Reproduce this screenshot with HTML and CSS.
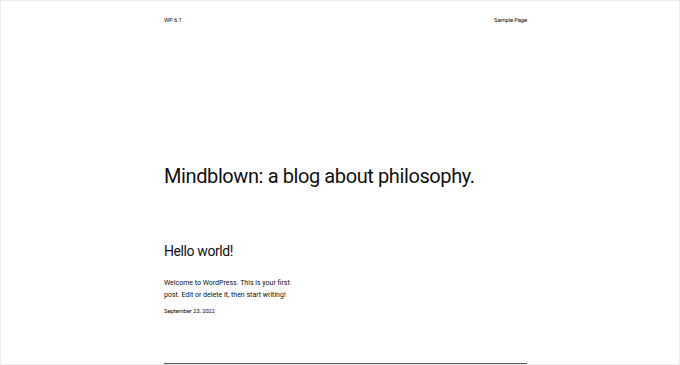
FILE: index.html
```html
<!DOCTYPE html>
<html lang="en">
<head>
    <meta charset="UTF-8">
    <meta name="viewport" content="width=device-width, initial-scale=1.0">
    <title>WP 6.1</title>
    <link rel="stylesheet" href="styles.css">
</head>
<body>
    <div class="frame">
        <div class="site">
            <!-- Header -->
            <header class="site-header">
                <a class="site-title" href="#">WP 6.1</a>
                <nav class="site-nav">
                    <a href="#">Sample Page</a>
                </nav>
            </header>

            <h1 class="tagline">Mindblown: a blog about philosophy.</h1>

            <!-- Post list -->
            <article class="post">
                <h2 class="post-title"><a href="#">Hello world!</a></h2>
                <p class="post-excerpt">Welcome to WordPress. This is your first post. Edit or delete it, then start writing!</p>
                <time class="post-date" datetime="2022-09-23">September 23, 2022</time>
            </article>

            <hr class="separator">
        </div>
    </div>
</body>
</html>
```

FILE: styles.css
```css
/* Twenty Twenty-Three style front page */
body {
    margin: 0;
    font-family: Roboto, "Noto Sans", sans-serif;
    color: #111;
    background-color: #fff;
}

a {
    color: inherit;
    text-decoration: none;
}

.frame {
    height: 365px;
    box-sizing: border-box;
    border: 1px solid #ececec;
    overflow: hidden;
}

.site {
    width: 363px;
    margin-left: 163px;
}

.site-header {
    display: flex;
    justify-content: space-between;
    padding-top: 14px;
    font-size: 6px;
    line-height: 10px;
    letter-spacing: -0.2px;
}

.tagline {
    margin: 138px 0 0;
    font-size: 20px;
    font-weight: 400;
    line-height: 26px;
    letter-spacing: -0.4px;
    white-space: nowrap;
}

.post-title {
    margin: 52px 0 0;
    font-size: 14px;
    font-weight: 400;
    line-height: 20px;
    letter-spacing: -0.4px;
}

.post-excerpt {
    width: 136px;
    margin: 16px 0 0;
    font-size: 7px;
    line-height: 12px;
}

.post-date {
    display: block;
    margin-top: 5px;
    font-size: 6px;
    line-height: 10px;
    letter-spacing: -0.15px;
}

.separator {
    margin: 47px 0 0;
    border: none;
    border-top: 1px solid #555;
}
```
